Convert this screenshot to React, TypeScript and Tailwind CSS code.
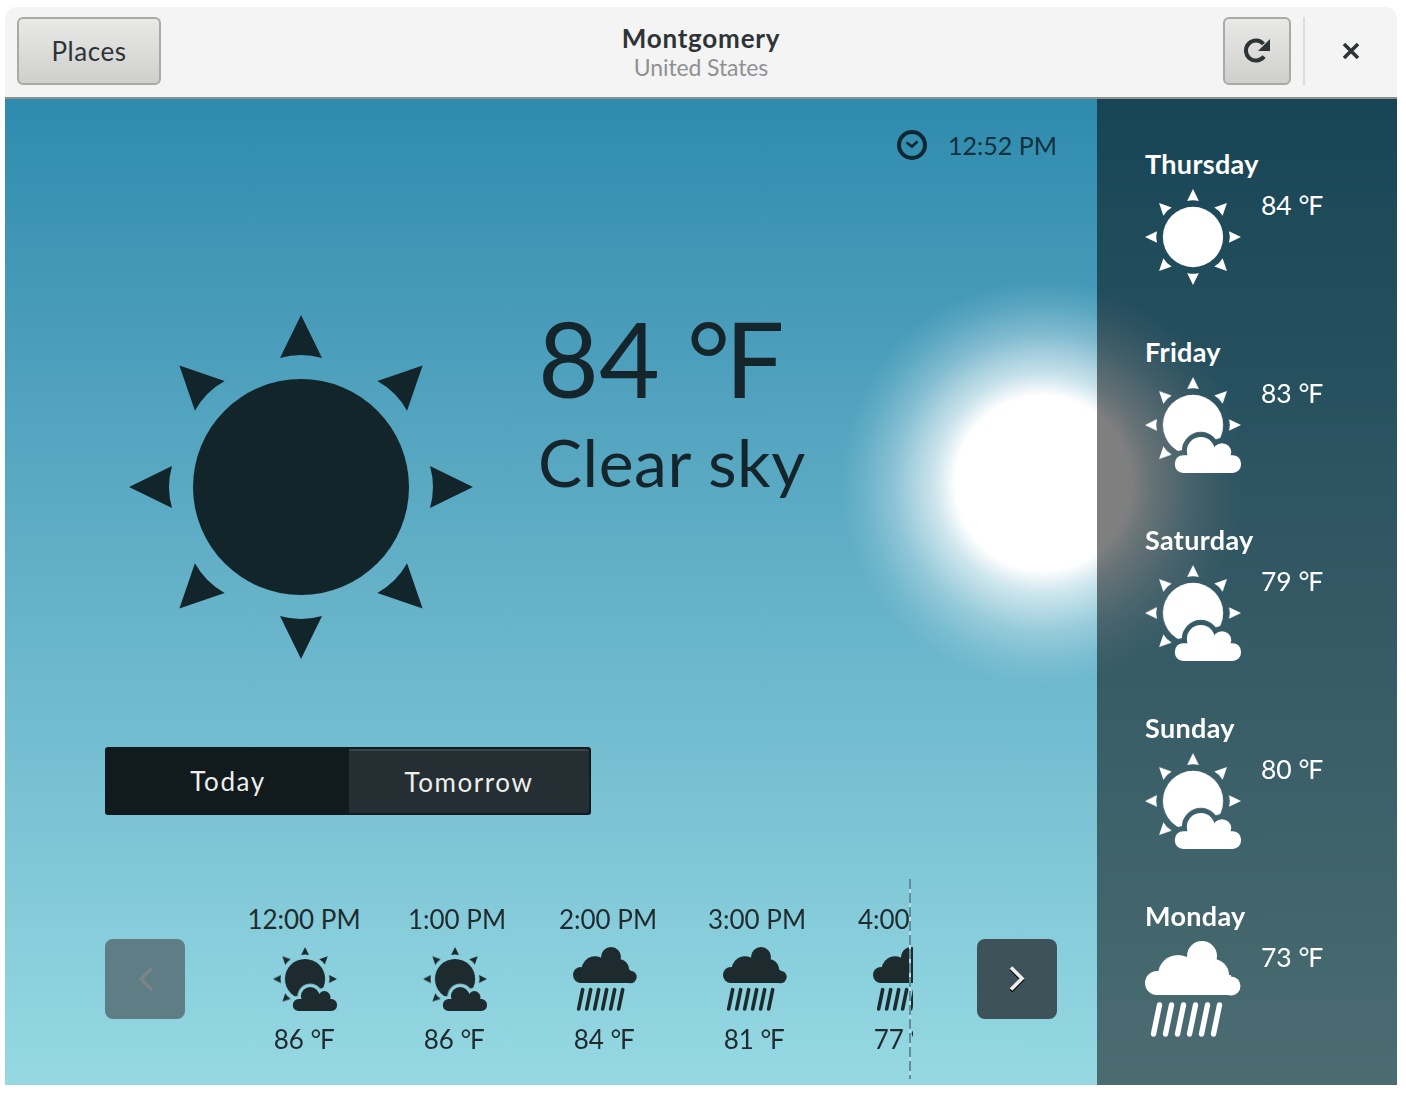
const FONT = "font-['Lato','Noto_Sans',sans-serif]";

const RAYS = [0, 45, 90, 135, 180, 225, 270, 315];
const CLOUD_RAYS = [0, 45, 90, 225, 270, 315];

function SunIcon({ size, color }: { size: number; color: string }) {
    return (
        <svg width={size} height={size} viewBox="0 0 344 344" fill={color} className="shrink-0">
            <circle cx="172" cy="172" r="108" />
            {RAYS.map((r) => (
                <path key={r} d="M172 0 L193 43 Q172 37 151 43 Z" transform={`rotate(${r} 172 172)`} />
            ))}
        </svg>
    );
}

function SunCloudIcon({ size, color, id }: { size: number; color: string; id: string }) {
    const cloud = (
        <>
            <circle cx="200" cy="265" r="50" />
            <circle cx="276" cy="270" r="33" />
            <rect x="107" y="280" width="237" height="64" rx="30" />
        </>
    );
    return (
        <svg width={size} height={size} viewBox="0 0 344 344" fill={color} className="shrink-0">
            <mask id={id}>
                <rect width="344" height="344" fill="white" />
                <g fill="black" stroke="black" strokeWidth="36">{cloud}</g>
            </mask>
            <g mask={`url(#${id})`}>
                <circle cx="172" cy="172" r="108" />
                {CLOUD_RAYS.map((r) => (
                    <path key={r} d="M172 0 L193 43 Q172 37 151 43 Z" transform={`rotate(${r} 172 172)`} />
                ))}
            </g>
            {cloud}
        </svg>
    );
}

function RainIcon({ size, color }: { size: number; color: string }) {
    return (
        <svg width={size} height={size} viewBox="0 0 96 96" fill={color} className="shrink-0">
            <circle cx="12" cy="42" r="12" />
            <circle cx="33" cy="34" r="20" />
            <circle cx="57" cy="15" r="15" />
            <circle cx="52" cy="32" r="18" />
            <circle cx="68" cy="34" r="16" />
            <circle cx="86" cy="45" r="9.5" />
            <rect x="10" y="34" width="76" height="20" />
            <g stroke={color} strokeWidth="5.4" strokeLinecap="round">
                {[0, 12, 24, 36, 48, 60].map((x) => (
                    <line key={x} x1={14.5 + x} y1="64" x2={8.5 + x} y2="93" />
                ))}
            </g>
        </svg>
    );
}

const days = [
    { name: 'Thursday', temp: '84', icon: 'sun' },
    { name: 'Friday', temp: '83', icon: 'cloud' },
    { name: 'Saturday', temp: '79', icon: 'cloud' },
    { name: 'Sunday', temp: '80', icon: 'cloud' },
    { name: 'Monday', temp: '73', icon: 'rain' },
];

const hours = [
    { time: '12:00 PM', temp: '86', icon: 'cloud', timeClass: 'pr-[2px]' },
    { time: '1:00 PM', temp: '86', icon: 'cloud', timeClass: 'pl-[4px]' },
    { time: '2:00 PM', temp: '84', icon: 'rain', timeClass: 'pl-[6px]' },
    { time: '3:00 PM', temp: '81', icon: 'rain', timeClass: 'pl-[4px]' },
    { time: '4:00 PM', temp: '77', icon: 'rain', timeClass: 'pl-[4px]' },
];

function Degrees({ value }: { value: string }) {
    return (
        <>
            {value} <span className="tracking-[-0.05em]">°F</span>
        </>
    );
}

export default function App() {
    return (
        <div className={`w-[1406px] h-[1094px] bg-white pt-[7px] px-[5px] overflow-hidden ${FONT}`}>
            <div className="w-[1392px] h-[1078px] flex flex-col">
                {/* Header bar */}
                <header className="h-[92px] shrink-0 bg-[#f4f4f4] rounded-t-[12px] border-b-2 border-[#8f8f8a] flex items-center pl-[12px] pb-[2px]">
                    <button className="w-[144px] h-[68px] pt-[1px] rounded-[6px] border-2 border-[#aaaaa5] bg-gradient-to-b from-[#e9e9e8] to-[#cfcfcd] text-[26px] text-[#2e3436] tracking-[0.02em]">
                        Places
                    </button>
                    <div className="flex-1 flex flex-col items-center pl-[18px]">
                        <div className="pt-[1px] text-[26px] leading-[32px] font-bold text-[#2e3436] tracking-[0.03em]">Montgomery</div>
                        <div className="mt-[-1px] text-[23px] leading-[28px] text-[#8f9192] tracking-[-0.005em]">United States</div>
                    </div>
                    <button className="w-[68px] h-[68px] rounded-[6px] border-2 border-[#aaaaa5] bg-gradient-to-b from-[#e9e9e8] to-[#cfcfcd] flex items-center justify-center">
                        <svg width="28" height="28" viewBox="0 0 28 28" fill="none">
                            <path d="M21 19.5 A10 10 0 1 1 20.5 7" stroke="#2e3436" strokeWidth="4" />
                            <path d="M27 2 V14 H15 Z" fill="#2e3436" />
                        </svg>
                    </button>
                    <div className="w-[2px] h-[68px] bg-[#dcdcdc] ml-[12px]" />
                    <div className="w-[92px] flex items-center justify-center">
                        <svg width="18" height="18" viewBox="0 0 18 18" stroke="#2e3436" strokeWidth="3.6">
                            <path d="M2 2 L16 16 M16 2 L2 16" />
                        </svg>
                    </div>
                </header>

                {/* Body */}
                <div className="flex-1 relative flex overflow-hidden bg-gradient-to-b from-[#2e8bae] to-[#96d9e3]">
                    {/* Sun glare behind the content */}
                    <div className="absolute left-[808px] top-[154px] w-[460px] h-[460px] bg-[radial-gradient(circle_closest-side,#ffffff_0%,#ffffff_38%,rgba(255,255,255,0.8)_44%,rgba(255,255,255,0.68)_48%,rgba(255,255,255,0.55)_54%,rgba(255,255,255,0.3)_65%,rgba(255,255,255,0.1)_78%,rgba(255,255,255,0)_88%)]" />

                    <main className="relative w-[1092px] shrink-0 flex flex-col pl-[100px] pr-[40px]">
                        <div className="pt-[30px] flex items-center justify-end gap-[21px] text-[25px] leading-[32px] text-[#12303d]">
                            <svg width="30" height="30" viewBox="0 0 30 30" fill="none" stroke="#0f2733" strokeWidth="4">
                                <circle cx="15" cy="15" r="13" />
                                <path d="M9.5 12.5 L15 16.5 L20.5 11.5" strokeWidth="2.6" />
                            </svg>
                            <span>12:52 PM</span>
                        </div>

                        <div className="mt-[154px] ml-[24px] flex items-start">
                            <SunIcon size={344} color="#12252b" />
                            <div className="ml-[65px] text-[#14252c]">
                                <div className="mt-[-23px] text-[105px] leading-[130px]">
                                    <Degrees value="84" />
                                </div>
                                <div className="text-[66px] leading-[88px] mt-[-4px] tracking-[0.008em]">Clear sky</div>
                            </div>
                        </div>

                        <div className="mt-[88px] w-[486px] h-[68px] flex rounded-[3px] border-2 border-[#111a1c] bg-[#111a1c] text-[26px] tracking-[0.06em] text-[#eeeeec]">
                            <div className="w-[242px] flex items-center justify-center">Today</div>
                            <div className="flex-1 flex items-center justify-center bg-[#252e32] border-t-2 border-[#3a4348] rounded-r-[3px]">
                                Tomorrow
                            </div>
                        </div>

                        <div className="mt-[64px] h-[200px] flex items-center">
                            <div className="w-[80px] h-[80px] rounded-[8px] bg-[#5e7d84] flex items-center justify-center pl-[2px] shrink-0">
                                <svg width="18" height="26" viewBox="0 0 18 26" fill="none" stroke="#7c8487" strokeWidth="3.6">
                                    <path d="M15 2 L4 13 L15 24" />
                                </svg>
                            </div>
                            <div className="relative w-[728px] h-[200px] shrink-0">
                                <div className="h-full overflow-hidden flex pl-[45px]">
                                    {hours.map((h, i) => (
                                        <div key={h.time} className="w-[150px] shrink-0 flex flex-col items-center pt-[24px] text-[#1f2b2e]">
                                            <div className={`h-[32px] text-[26px] leading-[32px] whitespace-nowrap ${h.timeClass}`}>{h.time}</div>
                                            <div className="mt-[12px]">
                                                {h.icon === 'cloud' ? (
                                                    <SunCloudIcon size={64} color="#1d2a2e" id={`hour-${i}`} />
                                                ) : (
                                                    <RainIcon size={64} color="#1d2a2e" />
                                                )}
                                            </div>
                                            <div className="mt-[12px] h-[32px] text-[26px] leading-[32px] pr-[3px]">
                                                <Degrees value={h.temp} />
                                            </div>
                                        </div>
                                    ))}
                                </div>
                                <div className="absolute right-[2px] top-0 bottom-0 w-[2px] bg-[repeating-linear-gradient(to_bottom,#5f8f9c_0px,#5f8f9c_10px,#b5e0e8_10px,#b5e0e8_14px)]" />
                            </div>
                            <div className="flex-1" />
                            <div className="w-[80px] h-[80px] rounded-[8px] bg-[#3d5259] flex items-center justify-center shrink-0">
                                <svg width="18" height="28" viewBox="0 0 18 28" fill="none" strokeWidth="3.6">
                                    <path d="M3 4 L14 15 L3 26" stroke="#000000" />
                                    <path d="M3 2.5 L14 13.5 L3 24.5" stroke="#eeeeec" />
                                </svg>
                            </div>
                        </div>
                    </main>

                    {/* Forecast sidebar */}
                    <aside className="relative w-[300px] shrink-0 bg-black/50 pl-[48px] pt-[47px] text-white">
                        {days.map((d, i) => (
                            <div key={d.name} className="h-[188px]">
                                <div className="text-[27px] leading-[36px] font-bold tracking-[0.012em]">{d.name}</div>
                                <div className="mt-[7px] flex items-start">
                                    {d.icon === 'sun' && <SunIcon size={96} color="#ffffff" />}
                                    {d.icon === 'cloud' && <SunCloudIcon size={96} color="#ffffff" id={`day-${i}`} />}
                                    {d.icon === 'rain' && <RainIcon size={96} color="#ffffff" />}
                                    <div className="ml-[20px] text-[26.5px] leading-[32px] whitespace-nowrap">
                                        <Degrees value={d.temp} />
                                    </div>
                                </div>
                            </div>
                        ))}
                    </aside>
                </div>
            </div>
        </div>
    );
}
